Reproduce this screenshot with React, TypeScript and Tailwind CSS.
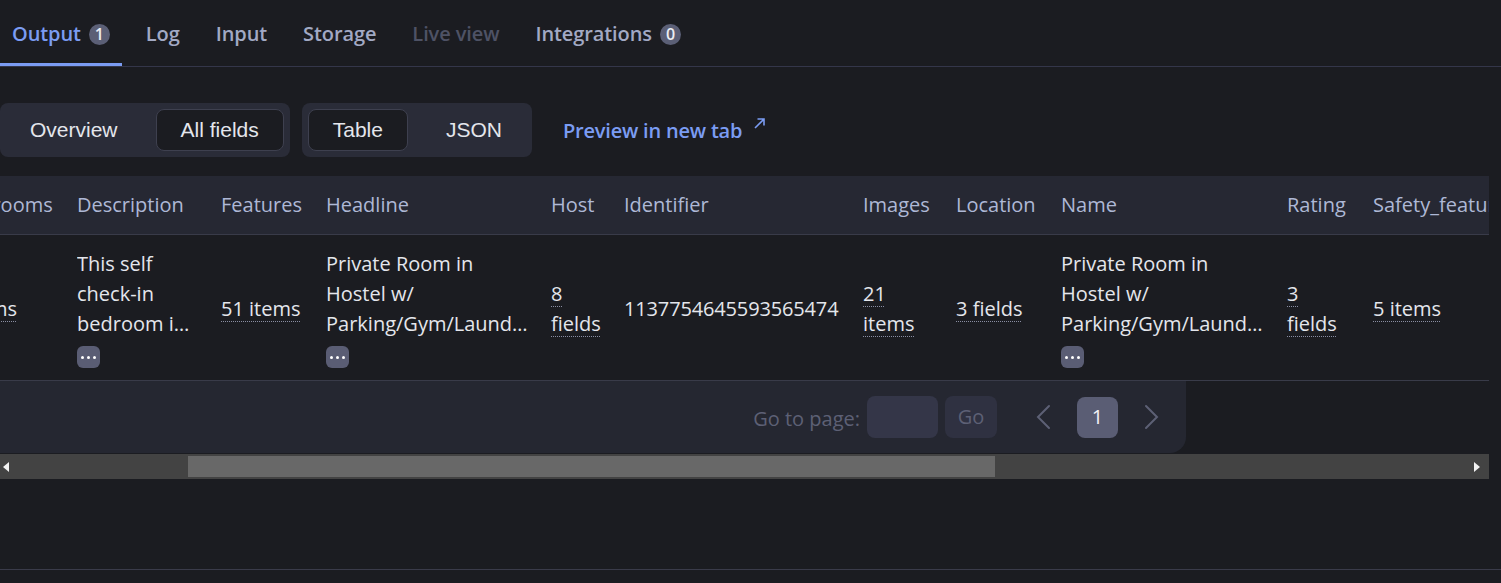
import React from 'react'

const TABS = [
  { label: 'Output', badge: '1', active: true },
  { label: 'Log' },
  { label: 'Input' },
  { label: 'Storage' },
  { label: 'Live view', dim: true },
  { label: 'Integrations', badge: '0' },
]

// column widths, first one is partly scrolled out of view
const COLS = [
  { key: 'bathrooms', label: 'Bathrooms', w: 'w-[128px]' },
  { key: 'description', label: 'Description', w: 'w-[144px]' },
  { key: 'features', label: 'Features', w: 'w-[105px]' },
  { key: 'headline', label: 'Headline', w: 'w-[225px]' },
  { key: 'host', label: 'Host', w: 'w-[73px]' },
  { key: 'identifier', label: 'Identifier', w: 'w-[239px]' },
  { key: 'images', label: 'Images', w: 'w-[93px]' },
  { key: 'location', label: 'Location', w: 'w-[105px]' },
  { key: 'name', label: 'Name', w: 'w-[226px]' },
  { key: 'rating', label: 'Rating', w: 'w-[86px]' },
  { key: 'safety', label: 'Safety_features', w: 'w-[200px]' },
]

const HEADLINE = 'Private Room in Hostel w/ Parking/Gym/Laundry & Coworking'

function Linked({ children }: { children: React.ReactNode }) {
  return (
    <span className="underline decoration-dotted decoration-[#8a8ea3] decoration-1 underline-offset-[5px]">
      {children}
    </span>
  )
}

function MoreButton() {
  return (
    <div className="mt-[7px] flex h-[22px] w-[23px] items-center justify-center gap-[3px] rounded-md bg-[#5a5d74]">
      <span className="h-[3px] w-[3px] rounded-full bg-white" />
      <span className="h-[3px] w-[3px] rounded-full bg-white" />
      <span className="h-[3px] w-[3px] rounded-full bg-white" />
    </div>
  )
}

function LongText({ text, width }: { text: string; width: string }) {
  return (
    <div className={width}>
      <div className="line-clamp-3">{text}</div>
      <MoreButton />
    </div>
  )
}

function Chevron({ dir }: { dir: 'left' | 'right' }) {
  return (
    <svg width="16" height="26" viewBox="0 0 16 26" fill="none" stroke="#5d6075" strokeWidth="2" strokeLinecap="round">
      {dir === 'left' ? <polyline points="14,2 3,13 14,24" /> : <polyline points="2,2 13,13 2,24" />}
    </svg>
  )
}

const cell = 'border-b border-[#393b49] px-3 pt-[14px] pb-[12px]'

export default function App() {
  return (
    <div className="h-[583px] w-[1501px] overflow-hidden bg-[#1b1c21] font-['Open_Sans',sans-serif] text-[20px] text-[#e4e6ec]">
      {/* tabs */}
      <div className="flex h-[66px] gap-3">
        {TABS.map((t) => (
          <div
            key={t.label}
            className={`flex items-center gap-2 border-b-[3px] px-3 pt-[5px] font-semibold tracking-[-0.1px] ${
              t.active
                ? 'border-[#7b9cf3] text-[#7b9cf3]'
                : t.dim
                  ? 'border-transparent text-[#4e5265]'
                  : 'border-transparent text-[#a2a9c4]'
            }`}
          >
            {t.label}
            {t.badge && (
              <span className="flex h-[21px] w-[21px] items-center justify-center rounded-full bg-[#5b5f76] text-[16px] font-semibold text-[#eceef3]">
                {t.badge}
              </span>
            )}
          </div>
        ))}
      </div>
      <div className="h-px bg-[#34364a]" />

      {/* view switches */}
      <div className="mt-[36px] flex items-center font-['Liberation_Sans',sans-serif] text-[21px]">
        <div className="flex h-[54px] items-center gap-[14px] rounded-lg bg-[#2a2c38] p-[6px]">
          <button className="h-[42px] px-6">Overview</button>
          <button className="h-[42px] rounded-lg border border-[#3e404f] bg-[#1b1c21] px-6">All fields</button>
        </div>
        <div className="ml-3 flex h-[54px] items-center gap-[14px] rounded-lg bg-[#2a2c38] p-[6px]">
          <button className="h-[42px] rounded-lg border border-[#3e404f] bg-[#1b1c21] px-6">Table</button>
          <button className="h-[42px] px-6">JSON</button>
        </div>
        <a className="ml-[31px] flex items-start gap-[12px] font-['Open_Sans',sans-serif] text-[20px] font-semibold tracking-[-0.2px] text-[#7b9cf3]">
          <span className="pt-[1px]">Preview in new tab</span>
          <svg width="11" height="11" viewBox="0 0 11 11" fill="none" stroke="#7b9cf3" strokeWidth="1.6" className="mt-[3px]">
            <path d="M1 10 L10 1 M3.5 1 H10 V7.5" />
          </svg>
        </a>
      </div>

      {/* table */}
      <div className="mt-[19px] w-[1489px] overflow-hidden">
        <table className="-ml-[63px] w-[1624px] table-fixed border-collapse">
          <colgroup>
            {COLS.map((c) => (
              <col key={c.key} className={c.w} />
            ))}
          </colgroup>
          <thead>
            <tr className="bg-[#262833]">
              {COLS.map((c) => (
                <th
                  key={c.key}
                  className="whitespace-nowrap border-b border-[#393b49] px-3 pt-[14px] pb-[14px] text-left font-normal leading-[30px] text-[#aeb8d6]"
                >
                  {c.label}
                </th>
              ))}
            </tr>
          </thead>
          <tbody className="leading-[30px]">
            <tr>
              <td className={`${cell} whitespace-nowrap`}><Linked>2 items</Linked></td>
              <td className={cell}>
                <LongText width="w-[120px]" text="This self check-in bedroom in a shared hostel has everything you need" />
              </td>
              <td className={`${cell} whitespace-nowrap`}><Linked>51 items</Linked></td>
              <td className={cell}>
                <LongText width="w-[206px]" text={HEADLINE} />
              </td>
              <td className={cell}><Linked>8<br />fields</Linked></td>
              <td className={`${cell} whitespace-nowrap tracking-[-0.15px]`}>1137754645593565474</td>
              <td className={cell}><Linked>21<br />items</Linked></td>
              <td className={`${cell} whitespace-nowrap`}><Linked>3 fields</Linked></td>
              <td className={cell}>
                <LongText width="w-[206px]" text={HEADLINE} />
              </td>
              <td className={cell}><Linked>3<br />fields</Linked></td>
              <td className={`${cell} whitespace-nowrap`}><Linked>5 items</Linked></td>
            </tr>
          </tbody>
        </table>

        {/* pagination */}
        <div className="flex h-[72px] w-[1186px] items-center justify-end rounded-br-2xl bg-[#252731] pr-[26px] text-[#5d6075]">
          <span className="pt-[3px]">Go to page:</span>
          <div className="ml-[7px] h-[42px] w-[71px] rounded-lg bg-[#343648]" />
          <button className="ml-[7px] h-[42px] w-[52px] rounded-lg bg-[#2f3141]">Go</button>
          <div className="ml-[38px]"><Chevron dir="left" /></div>
          <div className="ml-[26px] flex h-[41px] w-[41px] items-center justify-center rounded-lg bg-[#5a5d74] text-[#f1f2f6]">1</div>
          <div className="ml-[26px]"><Chevron dir="right" /></div>
        </div>
      </div>

      {/* horizontal scrollbar */}
      <div className="mt-[1px] flex h-[25px] w-[1489px] items-center bg-[#434343] px-[3px]">
        <svg width="6" height="10" viewBox="0 0 6 10"><polygon points="6,0 6,10 0,5" fill="#f2f2f2" /></svg>
        <div className="ml-[179px] h-[21px] w-[807px] bg-[#686868]" />
        <div className="flex-1" />
        <svg width="6" height="10" viewBox="0 0 6 10" className="mr-[6px]"><polygon points="0,0 0,10 6,5" fill="#f2f2f2" /></svg>
      </div>

      <div className="mt-[90px] h-px bg-[#3a3b4a]" />
    </div>
  )
}
